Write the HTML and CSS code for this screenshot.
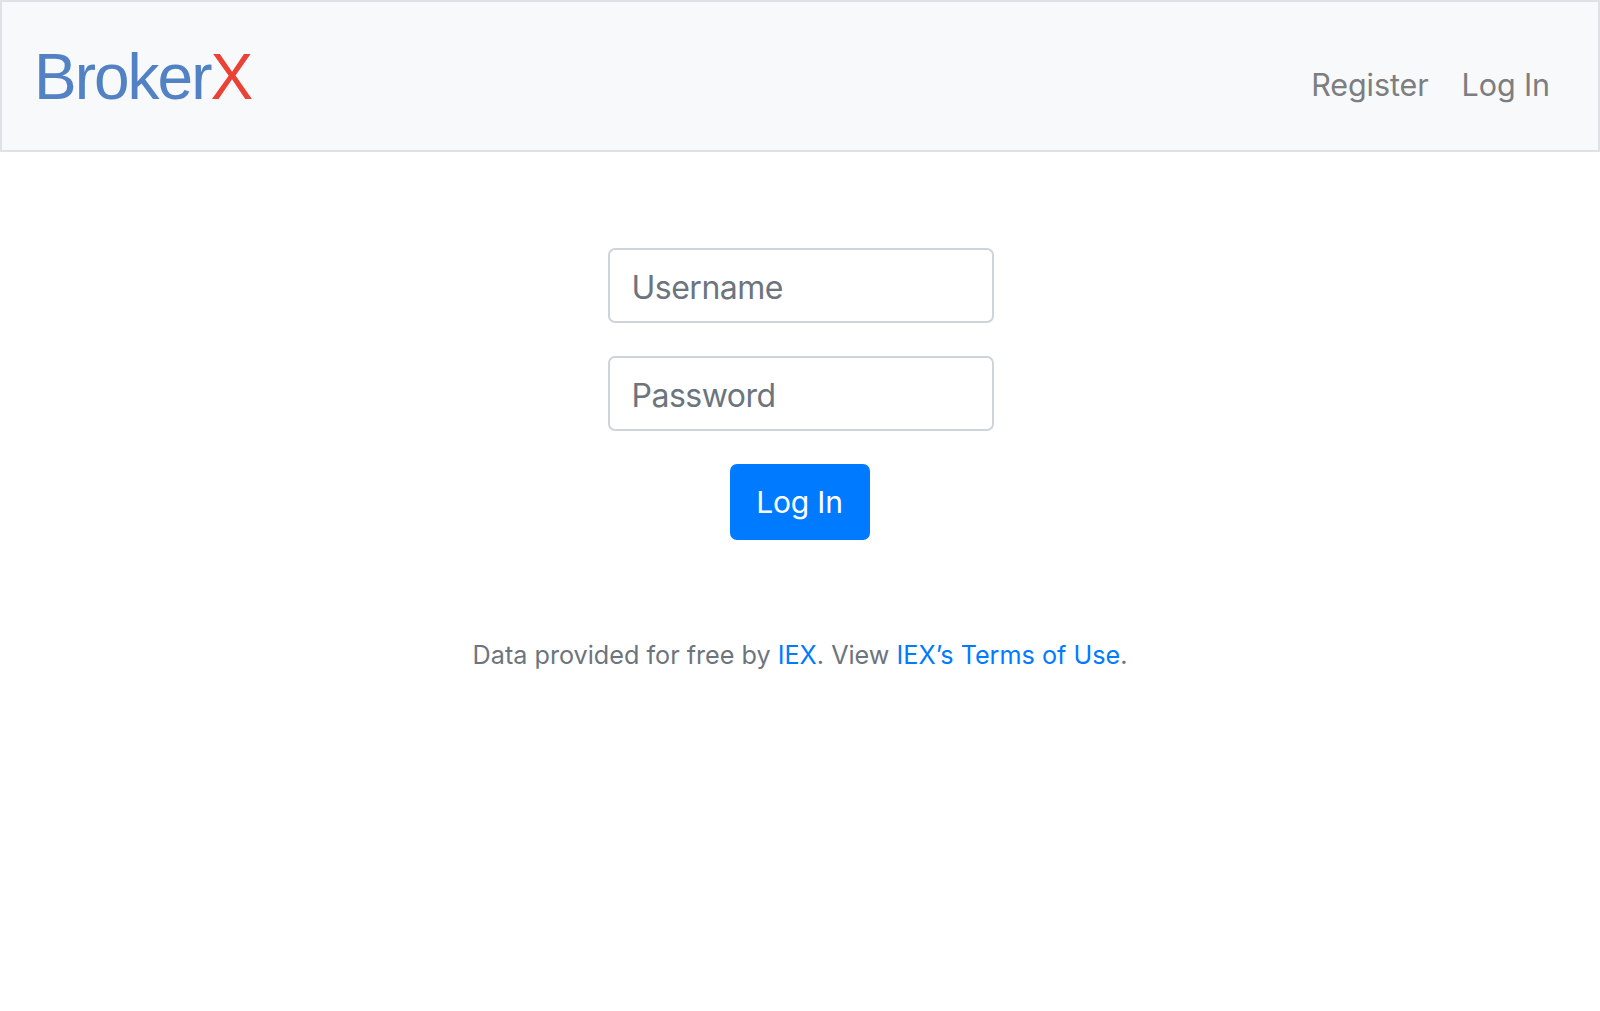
FILE: index.html
```html
<!DOCTYPE html>
<html lang="en">
<head>
<meta charset="utf-8">
<title>BrokerX</title>
<link rel="stylesheet" href="styles.css">
</head>
<body>
<nav class="navbar">
  <a class="brand" href="#"><span class="brand-main">Broker</span><span class="brand-x">X</span></a>
  <div class="nav-links">
    <a class="nav-link" href="#">Register</a>
    <a class="nav-link" href="#">Log In</a>
  </div>
</nav>
<main class="content">
  <form class="login-form">
    <input class="form-control" type="text" placeholder="Username">
    <input class="form-control" type="password" placeholder="Password">
    <button class="btn-primary" type="button">Log In</button>
  </form>
  <p class="attribution">Data provided for free by <a href="#">IEX</a>. View <a href="#">IEX’s Terms of Use</a>.</p>
</main>
</body>
</html>
```
FILE: styles.css
```css
* { box-sizing: border-box; }
html, body { margin: 0; padding: 0; background: #fff; }
body { font-family: Inter, "Noto Sans", "Liberation Sans", sans-serif; }

.navbar {
  height: 152px;
  background: #f8f9fa;
  border: 2px solid #dfe1e7;
  display: flex;
  align-items: center;
  justify-content: space-between;
  padding: 0 48px 0 32px;
}
.brand {
  font-family: "Liberation Sans", Arial, sans-serif;
  font-size: 64px;
  letter-spacing: -2px;
  text-decoration: none;
  line-height: 1;
  margin-top: 1px;
}
.brand-main { color: #5282c3; }
.brand-x { color: #ea4335; }

.nav-links {
  display: flex;
  gap: 33px;
  margin-top: 17px;
}
.nav-link {
  color: #7d7e7f;
  text-decoration: none;
  font-size: 30.5px;
  letter-spacing: -0.1px;
}

.content {
  display: flex;
  flex-direction: column;
  align-items: center;
  padding-top: 96px;
}
.login-form {
  display: flex;
  flex-direction: column;
  align-items: center;
  gap: 33px;
  margin-left: 1px;
}
.form-control {
  width: 386px;
  height: 75px;
  border: 2px solid #ced4da;
  border-radius: 7px;
  padding: 3px 22px 0;
  font-family: inherit;
  font-size: 32px;
  letter-spacing: -0.5px;
  color: #495057;
  background: #fff;
  outline: none;
}
.form-control::placeholder { color: #6c757d; opacity: 1; }
.btn-primary {
  width: 140px;
  height: 76px;
  background: #007bff;
  border: none;
  border-radius: 7px;
  color: #fff;
  font-family: inherit;
  font-size: 30px;
  letter-spacing: -0.2px;
  padding: 0;
  margin-left: -2px;
}
.attribution {
  margin: 100px 0 0;
  font-size: 25.2px;
  color: #6c757d;
}
.attribution a { color: #007bff; text-decoration: none; }
```
